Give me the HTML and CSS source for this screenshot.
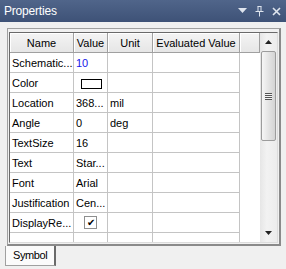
FILE: index.html
```html
<!DOCTYPE html>
<html lang="en">
<head>
    <meta charset="UTF-8">
    <title>Properties</title>
    <link rel="stylesheet" href="styles.css">
</head>
<body>
    <div class="titlebar">
        <span class="title">Properties</span>
        <div class="title-icons">
            <svg width="9" height="6" viewBox="0 0 9 6"><path d="M0 0H9L4.5 5Z" fill="#dfe5ee"/></svg>
            <svg width="9" height="11" viewBox="0 0 9 11"><path d="M2.5 0.5H6.5M3 0.5V5.5M6 0.5V5.5M0.5 5.5H8.5M4.5 5.5V10.5" stroke="#dfe5ee" fill="none"/></svg>
            <svg width="9" height="9" viewBox="0 0 9 9"><path d="M1 1L8 8M8 1L1 8" stroke="#dfe5ee" stroke-width="1.6"/></svg>
        </div>
    </div>

    <div class="panel">
        <div class="panel-inner">
            <div class="grid">
                <table>
                    <colgroup>
                        <col class="c-name"><col class="c-value"><col class="c-unit"><col class="c-eval"><col class="c-fill">
                    </colgroup>
                    <thead>
                        <tr><th>Name</th><th>Value</th><th>Unit</th><th>Evaluated Value</th><th class="fill"></th></tr>
                    </thead>
                    <tbody>
                        <tr><td>Schematic...</td><td class="num">10</td><td></td><td></td><td class="fill"></td></tr>
                        <tr><td>Color</td><td><span class="swatch"></span></td><td></td><td></td><td class="fill"></td></tr>
                        <tr><td>Location</td><td>368...</td><td>mil</td><td></td><td class="fill"></td></tr>
                        <tr><td>Angle</td><td>0</td><td>deg</td><td></td><td class="fill"></td></tr>
                        <tr><td>TextSize</td><td>16</td><td></td><td></td><td class="fill"></td></tr>
                        <tr><td>Text</td><td>Star...</td><td></td><td></td><td class="fill"></td></tr>
                        <tr><td>Font</td><td>Arial</td><td></td><td></td><td class="fill"></td></tr>
                        <tr><td>Justification</td><td>Cen...</td><td></td><td></td><td class="fill"></td></tr>
                        <tr><td>DisplayRe...</td><td><span class="check">&#10004;</span></td><td></td><td></td><td class="fill"></td></tr>
                        <tr><td></td><td></td><td></td><td></td><td class="fill"></td></tr>
                    </tbody>
                </table>
            </div>
            <div class="scrollbar">
                <div class="sb-btn"><svg width="7" height="4" viewBox="0 0 7 4"><path d="M3.5 0L7 4H0Z" fill="#222"/></svg></div>
                <div class="thumb"><span class="grip"></span></div>
                <div class="sb-track"></div>
                <div class="sb-btn"><svg width="7" height="4" viewBox="0 0 7 4"><path d="M0 0H7L3.5 4Z" fill="#222"/></svg></div>
            </div>
        </div>
    </div>

    <div class="tabs">
        <div class="tab">Symbol</div>
    </div>
</body>
</html>
```

FILE: styles.css
```css
body {
    margin: 0;
    width: 286px;
    height: 269px;
    overflow: hidden;
    background: #f0f0f0;
    font-family: 'Liberation Sans', Arial, sans-serif;
    font-size: 11px;
    color: #000;
}

.titlebar {
    height: 22px;
    display: flex;
    align-items: center;
    justify-content: space-between;
    padding: 0 5px 0 4px;
    box-sizing: border-box;
    background: linear-gradient(#50658a, #3e5277);
}

.title {
    color: #ffffff;
    font-size: 12px;
    letter-spacing: -0.2px;
}

.title-icons {
    display: flex;
    align-items: center;
    gap: 8px;
}

.panel {
    margin: 6px 5px 0 7px;
    border: 1px solid #a0a0a0;
    border-right: 2px solid #8a8a8a;
    border-bottom: 2px solid #8a8a8a;
    padding: 3px 1px 1px 1px;
}

.panel-inner {
    display: flex;
    height: 209px;
    border-top: 1px solid #6a6a6a;
    border-left: 1px solid #6a6a6a;
    border-right: 1px solid #dcdcdc;
    border-bottom: 1px solid #dcdcdc;
}

.grid {
    width: 250px;
    background: #ffffff;
    overflow: hidden;
}

table {
    table-layout: fixed;
    border-collapse: separate;
    border-spacing: 0;
    width: 250px;
}

.c-name { width: 64px; }
.c-value { width: 34px; }
.c-unit { width: 45px; }
.c-eval { width: 87px; }
.c-fill { width: 20px; }

th {
    height: 19px;
    padding: 0;
    font-weight: normal;
    text-align: center;
    white-space: nowrap;
    overflow: hidden;
    background: linear-gradient(#f4f4f4, #e6e6e6);
    border-right: 1px solid #a0a0a0;
    border-bottom: 1px solid #a0a0a0;
    box-shadow: inset 1px 1px #ffffff;
}

td {
    height: 19px;
    padding: 0 0 0 2px;
    white-space: nowrap;
    overflow: hidden;
    border-right: 1px solid #c4c4c4;
    border-bottom: 1px solid #c4c4c4;
}

td.fill {
    border: none;
}

.num {
    color: #1515e8;
}

.swatch {
    display: inline-block;
    width: 19px;
    height: 8px;
    margin: 1px 0 0 5px;
    border: 1px solid #000;
    background: #fff;
    vertical-align: middle;
}

.check {
    display: inline-block;
    width: 11px;
    height: 11px;
    margin-left: 8px;
    border: 1px solid #8e8f8f;
    font-size: 10px;
    line-height: 11px;
    text-align: center;
    vertical-align: middle;
}

.scrollbar {
    width: 17px;
    display: flex;
    flex-direction: column;
    align-items: center;
    background: linear-gradient(to right, #e6e6e6, #f2f2f2 40%, #ececec);
}

.sb-btn {
    height: 18px;
    display: flex;
    align-items: center;
    justify-content: center;
}

.thumb {
    width: 13px;
    height: 88px;
    border: 1px solid #9c9c9c;
    border-radius: 2px;
    display: flex;
    align-items: center;
    justify-content: center;
    background: linear-gradient(to right, #f6f6f6, #e4e4e4 50%, #d4d4d4);
}

.grip {
    width: 7px;
    height: 7px;
    background: repeating-linear-gradient(#555 0 1px, #f4f4f4 1px 2px);
}

.sb-track {
    flex: 1;
}

.tabs {
    padding-left: 5px;
}

.tab {
    display: inline-block;
    height: 19px;
    padding: 0 7px 0 7px;
    line-height: 19px;
    font-size: 11px;
    letter-spacing: -0.4px;
    background: #fbfbfb;
    border-left: 1px solid #a0a0a0;
    border-right: 2px solid #6a6a6a;
    border-bottom: 1px solid #a0a0a0;
}
```
